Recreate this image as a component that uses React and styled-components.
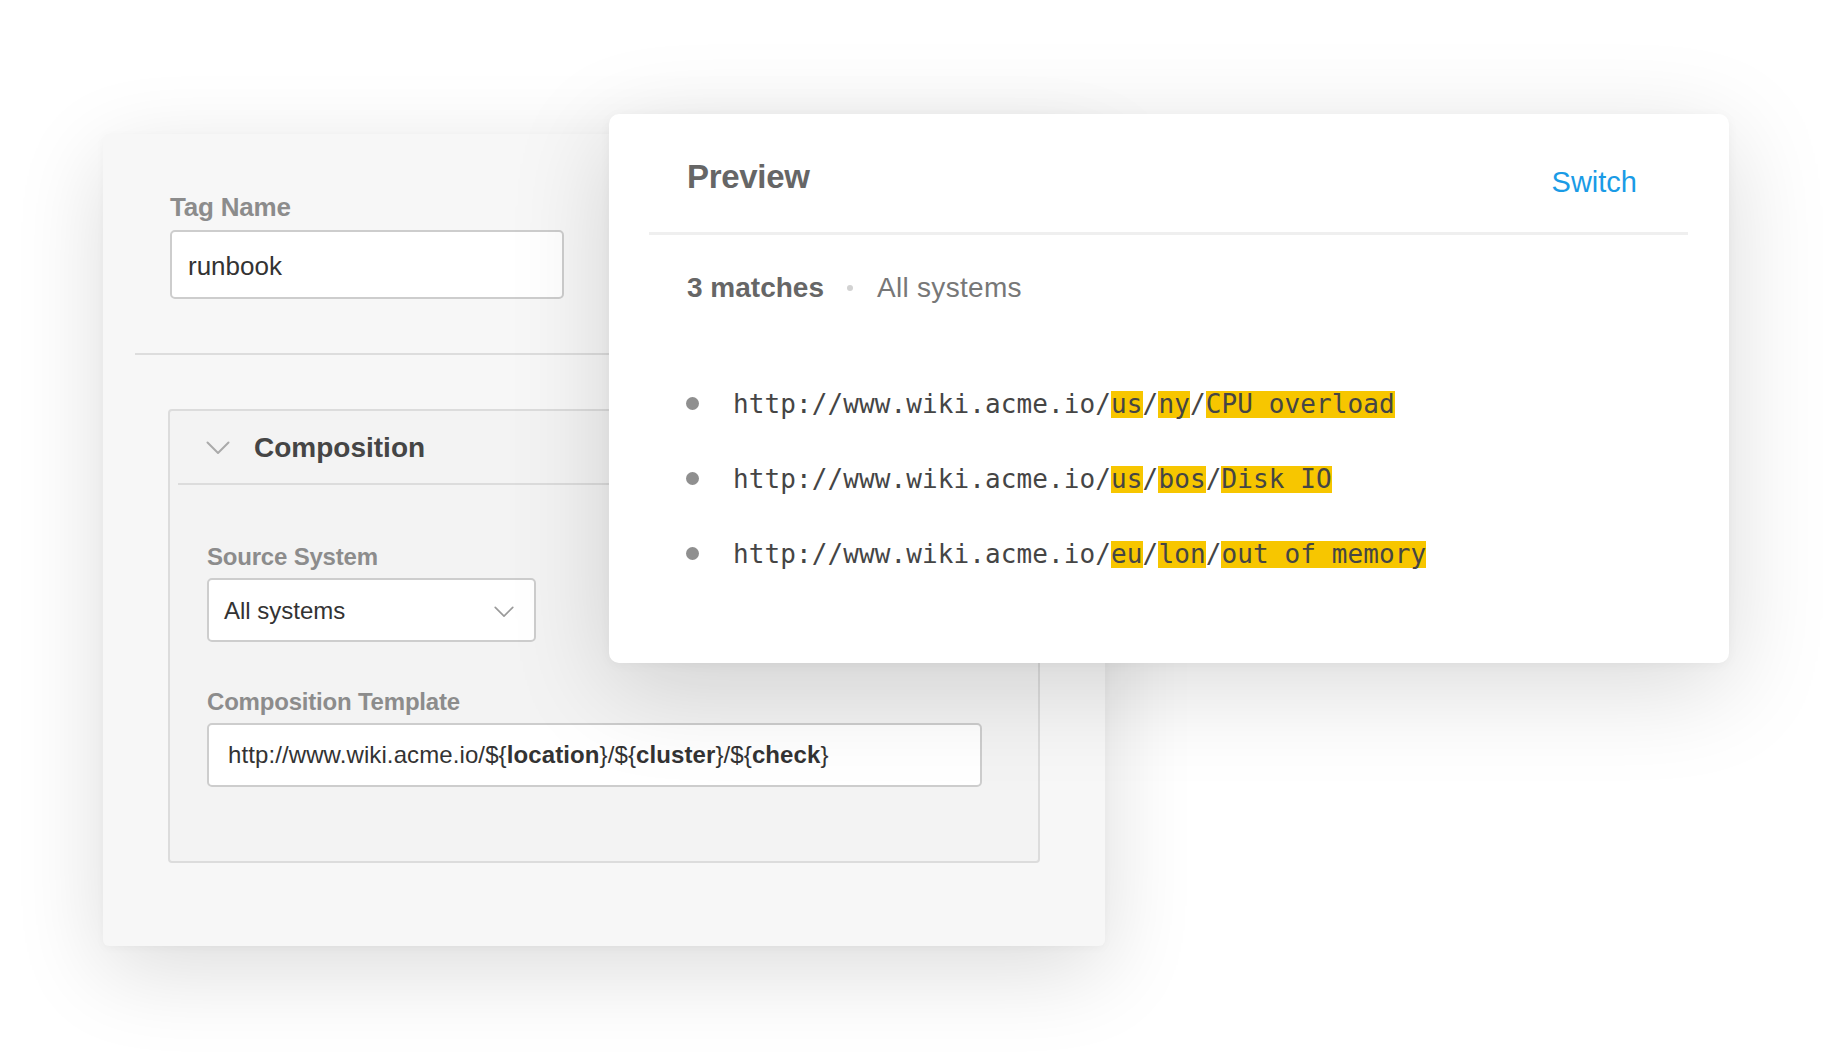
import React from 'react';
import styled, { createGlobalStyle } from 'styled-components';

const GlobalStyle = createGlobalStyle`
	html, body {
		margin: 0;
		padding: 0;
		background: #ffffff;
	}
	body {
		font-family: 'Liberation Sans', Arial, sans-serif;
		color: #333;
	}
`;

const matches = [
	{ id: 1, parts: ['us', 'ny', 'CPU overload'] },
	{ id: 2, parts: ['us', 'bos', 'Disk IO'] },
	{ id: 3, parts: ['eu', 'lon', 'out of memory'] },
];

const Chevron = ({ width, height, color }) => (
	<svg width={width} height={height} viewBox="0 0 24 14" fill="none">
		<path d="M1.5 1.5 L12 12 L22.5 1.5" stroke={color} strokeWidth="2" strokeLinecap="round" strokeLinejoin="round" />
	</svg>
);

const App = () => {
	return (
		<Stage>
			<GlobalStyle />
			<EditorCard>
				<FieldLabel size={26}>Tag Name</FieldLabel>
				<TextBox width={394} height={69} size={26} drop={3}>
					runbook
				</TextBox>
				<Rule />
				<Section>
					<SectionHead>
						<Chevron width={24} height={14} color="#aaaaaa" />
						<SectionTitle>Composition</SectionTitle>
					</SectionHead>
					<SectionBody>
						<FieldLabel size={24}>Source System</FieldLabel>
						<SelectBox>
							<span>All systems</span>
							<Chevron width={20} height={12} color="#9a9a9a" />
						</SelectBox>
						<FieldLabel size={24} gap={46}>
							Composition Template
						</FieldLabel>
						<TextBox width={775} height={64} size={24} pad={19} wide>
							http://www.wiki.acme.io/${'{'}
							<b>location</b>
							{'}'}/${'{'}
							<b>cluster</b>
							{'}'}/${'{'}
							<b>check</b>
							{'}'}
						</TextBox>
					</SectionBody>
				</Section>
			</EditorCard>

			<PreviewCard>
				<PreviewHead>
					<PreviewTitle>Preview</PreviewTitle>
					<SwitchLink>Switch</SwitchLink>
				</PreviewHead>
				<Meta>
					<strong>3 matches</strong>
					<MetaDot />
					<span>All systems</span>
				</Meta>
				<MatchList>
					{matches.map(m => (
						<MatchRow key={m.id}>
							<Bullet />
							<Url>
								http://www.wiki.acme.io/
								<Mark>{m.parts[0]}</Mark>/<Mark>{m.parts[1]}</Mark>/<Mark>{m.parts[2]}</Mark>
							</Url>
						</MatchRow>
					))}
				</MatchList>
			</PreviewCard>
		</Stage>
	);
};

export default App;

const Stage = styled.div`
	position: relative;
	width: 1847px;
	height: 1054px;
	padding: 134px 0 0 103px;
	box-sizing: border-box;
	overflow: hidden;
`;

const EditorCard = styled.section`
	width: 1002px;
	height: 812px;
	box-sizing: border-box;
	padding: 58px 0 0 67px;
	background: #f7f7f7;
	border-radius: 6px;
	box-shadow: 0 24px 90px rgba(0, 0, 0, 0.14), 0 2px 10px rgba(0, 0, 0, 0.03);
	display: flex;
	flex-direction: column;
	align-items: flex-start;
`;

const FieldLabel = styled.label`
	display: block;
	font-size: ${p => p.size}px;
	font-weight: 700;
	color: #8c8c8c;
	margin-top: ${p => p.gap || 0}px;
	margin-bottom: 7px;
	letter-spacing: -0.2px;
`;

const TextBox = styled.div`
	width: ${p => p.width}px;
	height: ${p => p.height}px;
	box-sizing: border-box;
	display: flex;
	align-items: center;
	padding-left: ${p => p.pad || 16}px;
	padding-top: ${p => p.drop || 0}px;
	background: #fff;
	border: 2px solid #cdcdcd;
	border-radius: 5px;
	font-size: ${p => p.size}px;
	letter-spacing: ${p => (p.wide ? '0.1px' : '0')};
	color: #333;
	white-space: pre;
	b {
		font-weight: 700;
		color: #333;
	}
`;

const Rule = styled.hr`
	align-self: stretch;
	margin: 54px 32px 0 -35px;
	border: none;
	border-top: 2px solid #dddddd;
`;

const Section = styled.div`
	margin-top: 54px;
	margin-left: -2px;
	width: 872px;
	box-sizing: border-box;
	background: #f3f3f3;
	border: 2px solid #dcdcdc;
	border-radius: 4px;
	padding-bottom: 74px;
`;

const SectionHead = styled.div`
	height: 74px;
	margin: 0 8px;
	display: flex;
	align-items: center;
	gap: 24px;
	padding-left: 28px;
	padding-top: 2px;
	box-sizing: border-box;
	border-bottom: 2px solid #dcdcdc;
`;

const SectionTitle = styled.h3`
	margin: 0;
	font-size: 28px;
	font-weight: 700;
	color: #454545;
`;

const SectionBody = styled.div`
	padding: 58px 0 0 37px;
	display: flex;
	flex-direction: column;
	align-items: flex-start;
`;

const SelectBox = styled.div`
	width: 329px;
	height: 64px;
	box-sizing: border-box;
	display: flex;
	align-items: center;
	justify-content: space-between;
	padding: 2px 20px 0 15px;
	background: #fff;
	border: 2px solid #cdcdcd;
	border-radius: 5px;
	font-size: 24px;
	color: #333;
	svg {
		margin-top: 2px;
	}
`;

const PreviewCard = styled.section`
	position: absolute;
	top: 114px;
	left: 609px;
	width: 1120px;
	height: 549px;
	box-sizing: border-box;
	background: #fff;
	border-radius: 10px;
	box-shadow: 0 24px 100px rgba(0, 0, 0, 0.15), 0 2px 12px rgba(0, 0, 0, 0.04);
`;

const PreviewHead = styled.div`
	margin: 0 41px 0 40px;
	padding: 44px 51px 33px 38px;
	display: flex;
	align-items: flex-start;
	justify-content: space-between;
	border-bottom: 3px solid #efefef;
`;

const PreviewTitle = styled.h2`
	margin: 0;
	font-size: 33px;
	font-weight: 700;
	color: #666;
	letter-spacing: -0.3px;
`;

const SwitchLink = styled.a`
	margin-top: 8px;
	font-size: 29px;
	color: #1a9be6;
	cursor: pointer;
`;

const Meta = styled.div`
	margin: 37px 0 0 78px;
	display: flex;
	align-items: center;
	font-size: 28px;
	color: #777;
	strong {
		font-weight: 700;
		color: #666;
	}
	span:last-child {
		letter-spacing: 0.3px;
	}
`;

const MetaDot = styled.span`
	width: 6px;
	height: 6px;
	margin: 0 24px 0 23px;
	border-radius: 50%;
	background: #d2d2d2;
`;

const MatchList = styled.ul`
	list-style: none;
	margin: 87px 0 0 77px;
	padding: 0;
	display: flex;
	flex-direction: column;
	gap: 48px;
`;

const MatchRow = styled.li`
	height: 27px;
	display: flex;
	align-items: center;
`;

const Bullet = styled.span`
	width: 13px;
	height: 13px;
	border-radius: 50%;
	background: #8f8f8f;
	margin-right: 34px;
	margin-top: -3px;
`;

const Url = styled.span`
	font-family: 'DejaVu Sans Mono', 'Liberation Mono', monospace;
	font-size: 26px;
	line-height: 27px;
	letter-spacing: 0.1px;
	color: #454545;
	white-space: pre;
`;

const Mark = styled.span`
	display: inline-block;
	line-height: 27px;
	height: 27px;
	background: #f7c600;
`;
